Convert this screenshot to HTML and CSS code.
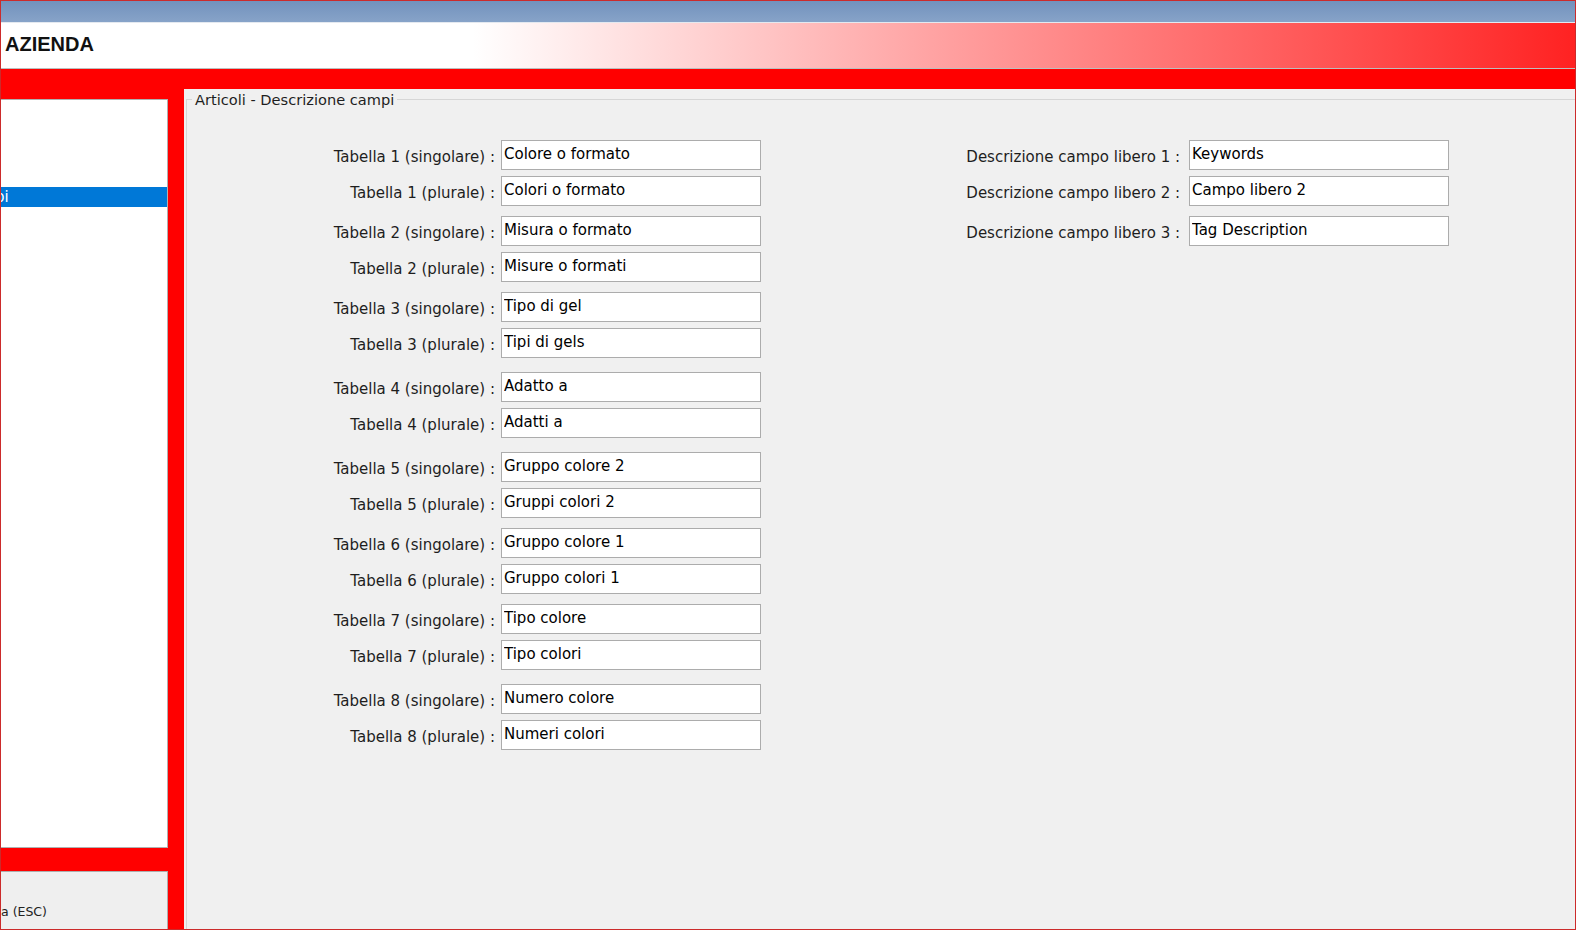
FILE: index.html
```html
<!DOCTYPE html>
<html lang="it">
<head>
    <meta charset="UTF-8">
    <title>Azienda - Articoli</title>
    <link rel="stylesheet" href="styles.css">
</head>
<body>
    <div class="window">
        <div class="titlebar"></div>
        <header class="header">
            <h1>AZIENDA</h1>
        </header>
        <div class="red-band"></div>

        <main class="main">
            <aside class="sidebar">
                <ul class="menu">
                    <li></li>
                    <li></li>
                    <li></li>
                    <li></li>
                    <li class="selected"><span>pi</span></li>
                </ul>
                <button class="close-btn">a (ESC)</button>
            </aside>

            <section class="content">
                <fieldset class="group">
                    <legend>Articoli - Descrizione campi</legend>
                    <div class="columns">
                        <div class="col col-left">
                            <div class="pair">
                                <div class="row"><label>Tabella 1 (singolare) :</label><input type="text" value="Colore o formato"></div>
                                <div class="row"><label>Tabella 1 (plurale) :</label><input type="text" value="Colori o formato"></div>
                            </div>
                            <div class="pair">
                                <div class="row"><label>Tabella 2 (singolare) :</label><input type="text" value="Misura o formato"></div>
                                <div class="row"><label>Tabella 2 (plurale) :</label><input type="text" value="Misure o formati"></div>
                            </div>
                            <div class="pair">
                                <div class="row"><label>Tabella 3 (singolare) :</label><input type="text" value="Tipo di gel"></div>
                                <div class="row"><label>Tabella 3 (plurale) :</label><input type="text" value="Tipi di gels"></div>
                            </div>
                            <div class="pair wide">
                                <div class="row"><label>Tabella 4 (singolare) :</label><input type="text" value="Adatto a"></div>
                                <div class="row"><label>Tabella 4 (plurale) :</label><input type="text" value="Adatti a"></div>
                            </div>
                            <div class="pair wide">
                                <div class="row"><label>Tabella 5 (singolare) :</label><input type="text" value="Gruppo colore 2"></div>
                                <div class="row"><label>Tabella 5 (plurale) :</label><input type="text" value="Gruppi colori 2"></div>
                            </div>
                            <div class="pair">
                                <div class="row"><label>Tabella 6 (singolare) :</label><input type="text" value="Gruppo colore 1"></div>
                                <div class="row"><label>Tabella 6 (plurale) :</label><input type="text" value="Gruppo colori 1"></div>
                            </div>
                            <div class="pair">
                                <div class="row"><label>Tabella 7 (singolare) :</label><input type="text" value="Tipo colore"></div>
                                <div class="row"><label>Tabella 7 (plurale) :</label><input type="text" value="Tipo colori"></div>
                            </div>
                            <div class="pair wide">
                                <div class="row"><label>Tabella 8 (singolare) :</label><input type="text" value="Numero colore"></div>
                                <div class="row"><label>Tabella 8 (plurale) :</label><input type="text" value="Numeri colori"></div>
                            </div>
                        </div>

                        <div class="col col-right">
                            <div class="pair">
                                <div class="row"><label>Descrizione campo libero 1 :</label><input type="text" value="Keywords"></div>
                                <div class="row"><label>Descrizione campo libero 2 :</label><input type="text" value="Campo libero 2"></div>
                            </div>
                            <div class="pair">
                                <div class="row"><label>Descrizione campo libero 3 :</label><input type="text" value="Tag Description"></div>
                            </div>
                        </div>
                    </div>
                </fieldset>
            </section>
        </main>
    </div>
</body>
</html>
```

FILE: styles.css
```css
*,
::after,
::before {
  margin: 0;
  padding: 0;
  box-sizing: border-box;
}

body {
  font-family: "DejaVu Sans", sans-serif;
  font-size: 15px;
  color: #1e1e1e;
  overflow: hidden;
}

.window {
  width: 1576px;
  height: 930px;
  border: 1px solid #cc2b2b;
  display: flex;
  flex-direction: column;
}

.titlebar {
  height: 22px;
  background: linear-gradient(#7292bd, #87a3c8);
  border-bottom: 1px solid #e4e9f0;
}

.header {
  height: 46px;
  background: linear-gradient(to right, #fff 30%, #ff2222 100%);
  border-bottom: 1px solid #bdbdbd;
  display: flex;
  align-items: center;
  padding-left: 4px;
}

.header h1 {
  font-family: "Liberation Sans", Arial, sans-serif;
  font-size: 20px;
  font-weight: bold;
  color: #111;
  margin-top: -2px;
}

.red-band {
  height: 20px;
  background: #ff0000;
}

.main {
  flex: 1;
  display: flex;
  min-height: 0;
}

/* left column */
.sidebar {
  width: 183px;
  background: #ff0000;
  padding-top: 10px;
  display: flex;
  flex-direction: column;
  gap: 23px;
}

.menu {
  list-style: none;
  width: 167px;
  flex: 1;
  background: #fff;
  border: 1px solid #b0b0b0;
  border-left: none;
  padding-top: 7px;
}

.menu li {
  height: 20px;
  overflow: hidden;
  line-height: 20px;
}

.menu li.selected {
  background: #0078d7;
  color: #fff;
}

.menu li span {
  display: block;
  margin-left: -6px;
}

.close-btn {
  width: 167px;
  height: 58px;
  background: #efefef;
  border: 1px solid #adadad;
  border-left: none;
  border-bottom: none;
  font-family: "DejaVu Sans", sans-serif;
  font-size: 12.5px;
  color: #222;
  text-align: left;
  padding: 22px 0 0 0;
}

/* form area */
.content {
  flex: 1;
  background: #f0f0f0;
  padding: 2px 0 0 2px;
}

.group {
  height: 100%;
  border: 1px solid #d6d6d6;
  border-right: none;
  border-bottom: none;
}

.group legend {
  margin-left: 5px;
  padding: 0 3px;
  color: #1e1e1e;
  font-size: 14.6px;
}

.columns {
  display: flex;
  padding-top: 32px;
}

.col-left {
  padding-left: 108px;
}

.col-right {
  margin-left: 164px;
}

.pair {
  display: flex;
  flex-direction: column;
  gap: 6px;
}

.pair + .pair {
  margin-top: 10px;
}

.pair.wide {
  margin-top: 14px;
}

.row {
  display: grid;
  grid-template-columns: 200px 260px;
  column-gap: 6px;
}

.col-right .row {
  grid-template-columns: 255px 260px;
  column-gap: 9px;
}

.row label {
  justify-self: end;
  align-self: center;
  padding-top: 4px;
  white-space: nowrap;
}

.row input {
  height: 30px;
  border: 1px solid #acacac;
  background: #fff;
  padding: 0 2px 2px;
  font-family: "DejaVu Sans", sans-serif;
  font-size: 15px;
  color: #000;
  outline: none;
}
```
